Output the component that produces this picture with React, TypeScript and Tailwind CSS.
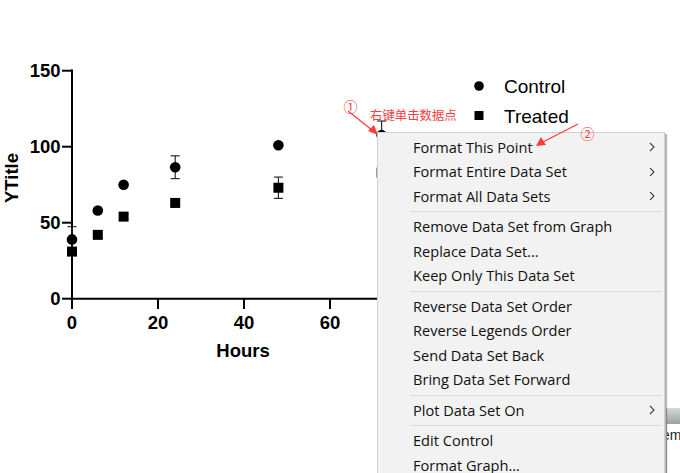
import React from "react";

type Pt = { h: number; v: number; e?: number };

const control: Pt[] = [
  { h: 0, v: 39, e: 8.4 },
  { h: 6, v: 58 },
  { h: 12, v: 75 },
  { h: 24, v: 86.5, e: 7.5 },
  { h: 48, v: 101 },
  { h: 72, v: 107.6, e: 9.3 },
];

const treated: Pt[] = [
  { h: 0, v: 31 },
  { h: 6, v: 42 },
  { h: 12, v: 54 },
  { h: 24, v: 63 },
  { h: 48, v: 73, e: 7 },
  { h: 72, v: 83, e: 6.6 },
];

const X = (h: number) => 72 + h * 4.3;
const Y = (v: number) => 298.7 - v * 1.52;

function ErrorBar({ p }: { p: Pt }) {
  if (!p.e) return null;
  const x = X(p.h);
  const y1 = Y(p.v + p.e);
  const y2 = Y(p.v - p.e);
  return (
    <g stroke="#2a2a2a" strokeWidth={1.2}>
      <line x1={x} y1={y1} x2={x} y2={y2} />
      <line x1={x - 4.5} y1={y1} x2={x + 4.5} y2={y1} />
      <line x1={x - 4.5} y1={y2} x2={x + 4.5} y2={y2} />
    </g>
  );
}

function Chart() {
  const yTicks = [0, 50, 100, 150];
  const xTicks = [0, 20, 40, 60];
  return (
    <svg width={680} height={473} className="block">
      <g fontFamily="'Liberation Sans', Arial, sans-serif" fontWeight={700} fontSize={18.5} fill="#000">
        {/* axes */}
        <line x1={72} y1={69.5} x2={72} y2={300} stroke="#000" strokeWidth={2} />
        <line x1={71} y1={298.7} x2={X(80)} y2={298.7} stroke="#000" strokeWidth={2} />
        <line x1={X(80)} y1={298.7} x2={X(80)} y2={309} stroke="#000" strokeWidth={2} />
        {yTicks.map((t) => (
          <g key={t}>
            <line x1={62} y1={Y(t)} x2={72} y2={Y(t)} stroke="#000" strokeWidth={2} />
            <text x={60.5} y={Y(t) + 6.5} textAnchor="end">
              {t}
            </text>
          </g>
        ))}
        {xTicks.map((t) => (
          <g key={t}>
            <line x1={X(t)} y1={298.7} x2={X(t)} y2={309} stroke="#000" strokeWidth={2} />
            <text x={X(t)} y={329} textAnchor="middle">
              {t}
            </text>
          </g>
        ))}
        <text x={243} y={356.5} textAnchor="middle">
          Hours
        </text>
        <text x={17.5} y={178} textAnchor="middle" transform="rotate(-90 17.5 178)">
          YTitle
        </text>
      </g>

      {/* data */}
      {control.map((p) => (
        <ErrorBar key={"ce" + p.h} p={p} />
      ))}
      {treated.map((p) => (
        <ErrorBar key={"te" + p.h} p={p} />
      ))}
      {control.map((p) => (
        <circle key={"c" + p.h} cx={X(p.h)} cy={Y(p.v)} r={5.3} fill="#000" />
      ))}
      {treated.map((p) => (
        <rect key={"t" + p.h} x={X(p.h) - 5} y={Y(p.v) - 5} width={10} height={10} fill="#000" />
      ))}

      {/* legend */}
      <circle cx={479} cy={86} r={4.8} fill="#000" />
      <rect x={474.5} y={111} width={9} height={9} fill="#000" />
      <g fontFamily="'Liberation Sans', Arial, sans-serif" fontSize={19} fill="#000">
        <text x={504} y={92.5}>Control</text>
        <text x={504} y={122.5}>Treated</text>
      </g>
    </svg>
  );
}

// red callouts drawn on top of everything, including the menu
function Callouts() {
  return (
    <svg width={680} height={473} className="absolute left-0 top-0 pointer-events-none">
      <g fill="#ff3c3c" stroke="#ff3c3c">
        <line x1={348} y1={111} x2={372} y2={130} strokeWidth={1.3} />
        <polygon points="378,135 368,131 374,125" stroke="none" />
        <line x1={578} y1={124} x2={543} y2={142} strokeWidth={1.3} />
        <polygon points="536,146 541,137 546,145" stroke="none" />
      </g>
      <g fontFamily="'Noto Sans CJK SC', 'Noto Sans', sans-serif" fill="#ff3c3c">
        <text x={350.5} y={112} fontSize={14} textAnchor="middle">
          ①
        </text>
        <text x={587.5} y={139} fontSize={14} textAnchor="middle">
          ②
        </text>
        <text x={370} y={119.5} fontSize={12.4}>
          右键单击数据点
        </text>
      </g>
    </svg>
  );
}

function Chevron() {
  return (
    <svg width={6} height={10} viewBox="0 0 6 10" className="block">
      <polyline points="1,1 5,5 1,9" fill="none" stroke="#444" strokeWidth={1.1} />
    </svg>
  );
}

type Item = { label: string; sub?: boolean } | "sep";

const items: Item[] = [
  { label: "Format This Point", sub: true },
  { label: "Format Entire Data Set", sub: true },
  { label: "Format All Data Sets", sub: true },
  "sep",
  { label: "Remove Data Set from Graph" },
  { label: "Replace Data Set..." },
  { label: "Keep Only This Data Set" },
  "sep",
  { label: "Reverse Data Set Order" },
  { label: "Reverse Legends Order" },
  { label: "Send Data Set Back" },
  { label: "Bring Data Set Forward" },
  "sep",
  { label: "Plot Data Set On", sub: true },
  "sep",
  { label: "Edit Control" },
  { label: "Format Graph..." },
];

function ContextMenu() {
  return (
    <div className="absolute left-[377px] top-[132px] w-[288px] h-[350px] bg-[#f2f2f2] border border-[#cfcfcf] shadow-[2px_2px_1px_rgba(0,0,0,0.28)] pt-[2px] font-['Open_Sans','Noto_Sans',sans-serif] text-[14.6px] text-[#111]">
      {items.map((it, i) =>
        it === "sep" ? (
          <div key={i} className="h-px bg-[#d9d9d9] ml-[32px] mr-[2px] my-[2.5px]" />
        ) : (
          <div key={i} className="h-[24.5px] flex items-center justify-between pl-[35px] pr-[9px]">
            <span className="leading-none">{it.label}</span>
            {it.sub ? <Chevron /> : null}
          </div>
        )
      )}
    </div>
  );
}

export default function App() {
  return (
    <div className="relative w-[680px] h-[473px] overflow-hidden bg-white">
      <Chart />
      {/* window behind the menu, lower right */}
      <div className="absolute left-[666px] top-[408px] w-[14px] h-[65px] overflow-hidden bg-white border-l border-[#bdbdbd]">
        <div className="h-[16px] bg-gradient-to-b from-[#d4d8d8] to-[#9aa3a3]" />
        <div className="pt-[4px] -ml-[5px] font-['Liberation_Sans',Arial,sans-serif] text-[14px] text-[#222] leading-none whitespace-nowrap">
          em
        </div>
      </div>
      <ContextMenu />
      <Callouts />
    </div>
  );
}
